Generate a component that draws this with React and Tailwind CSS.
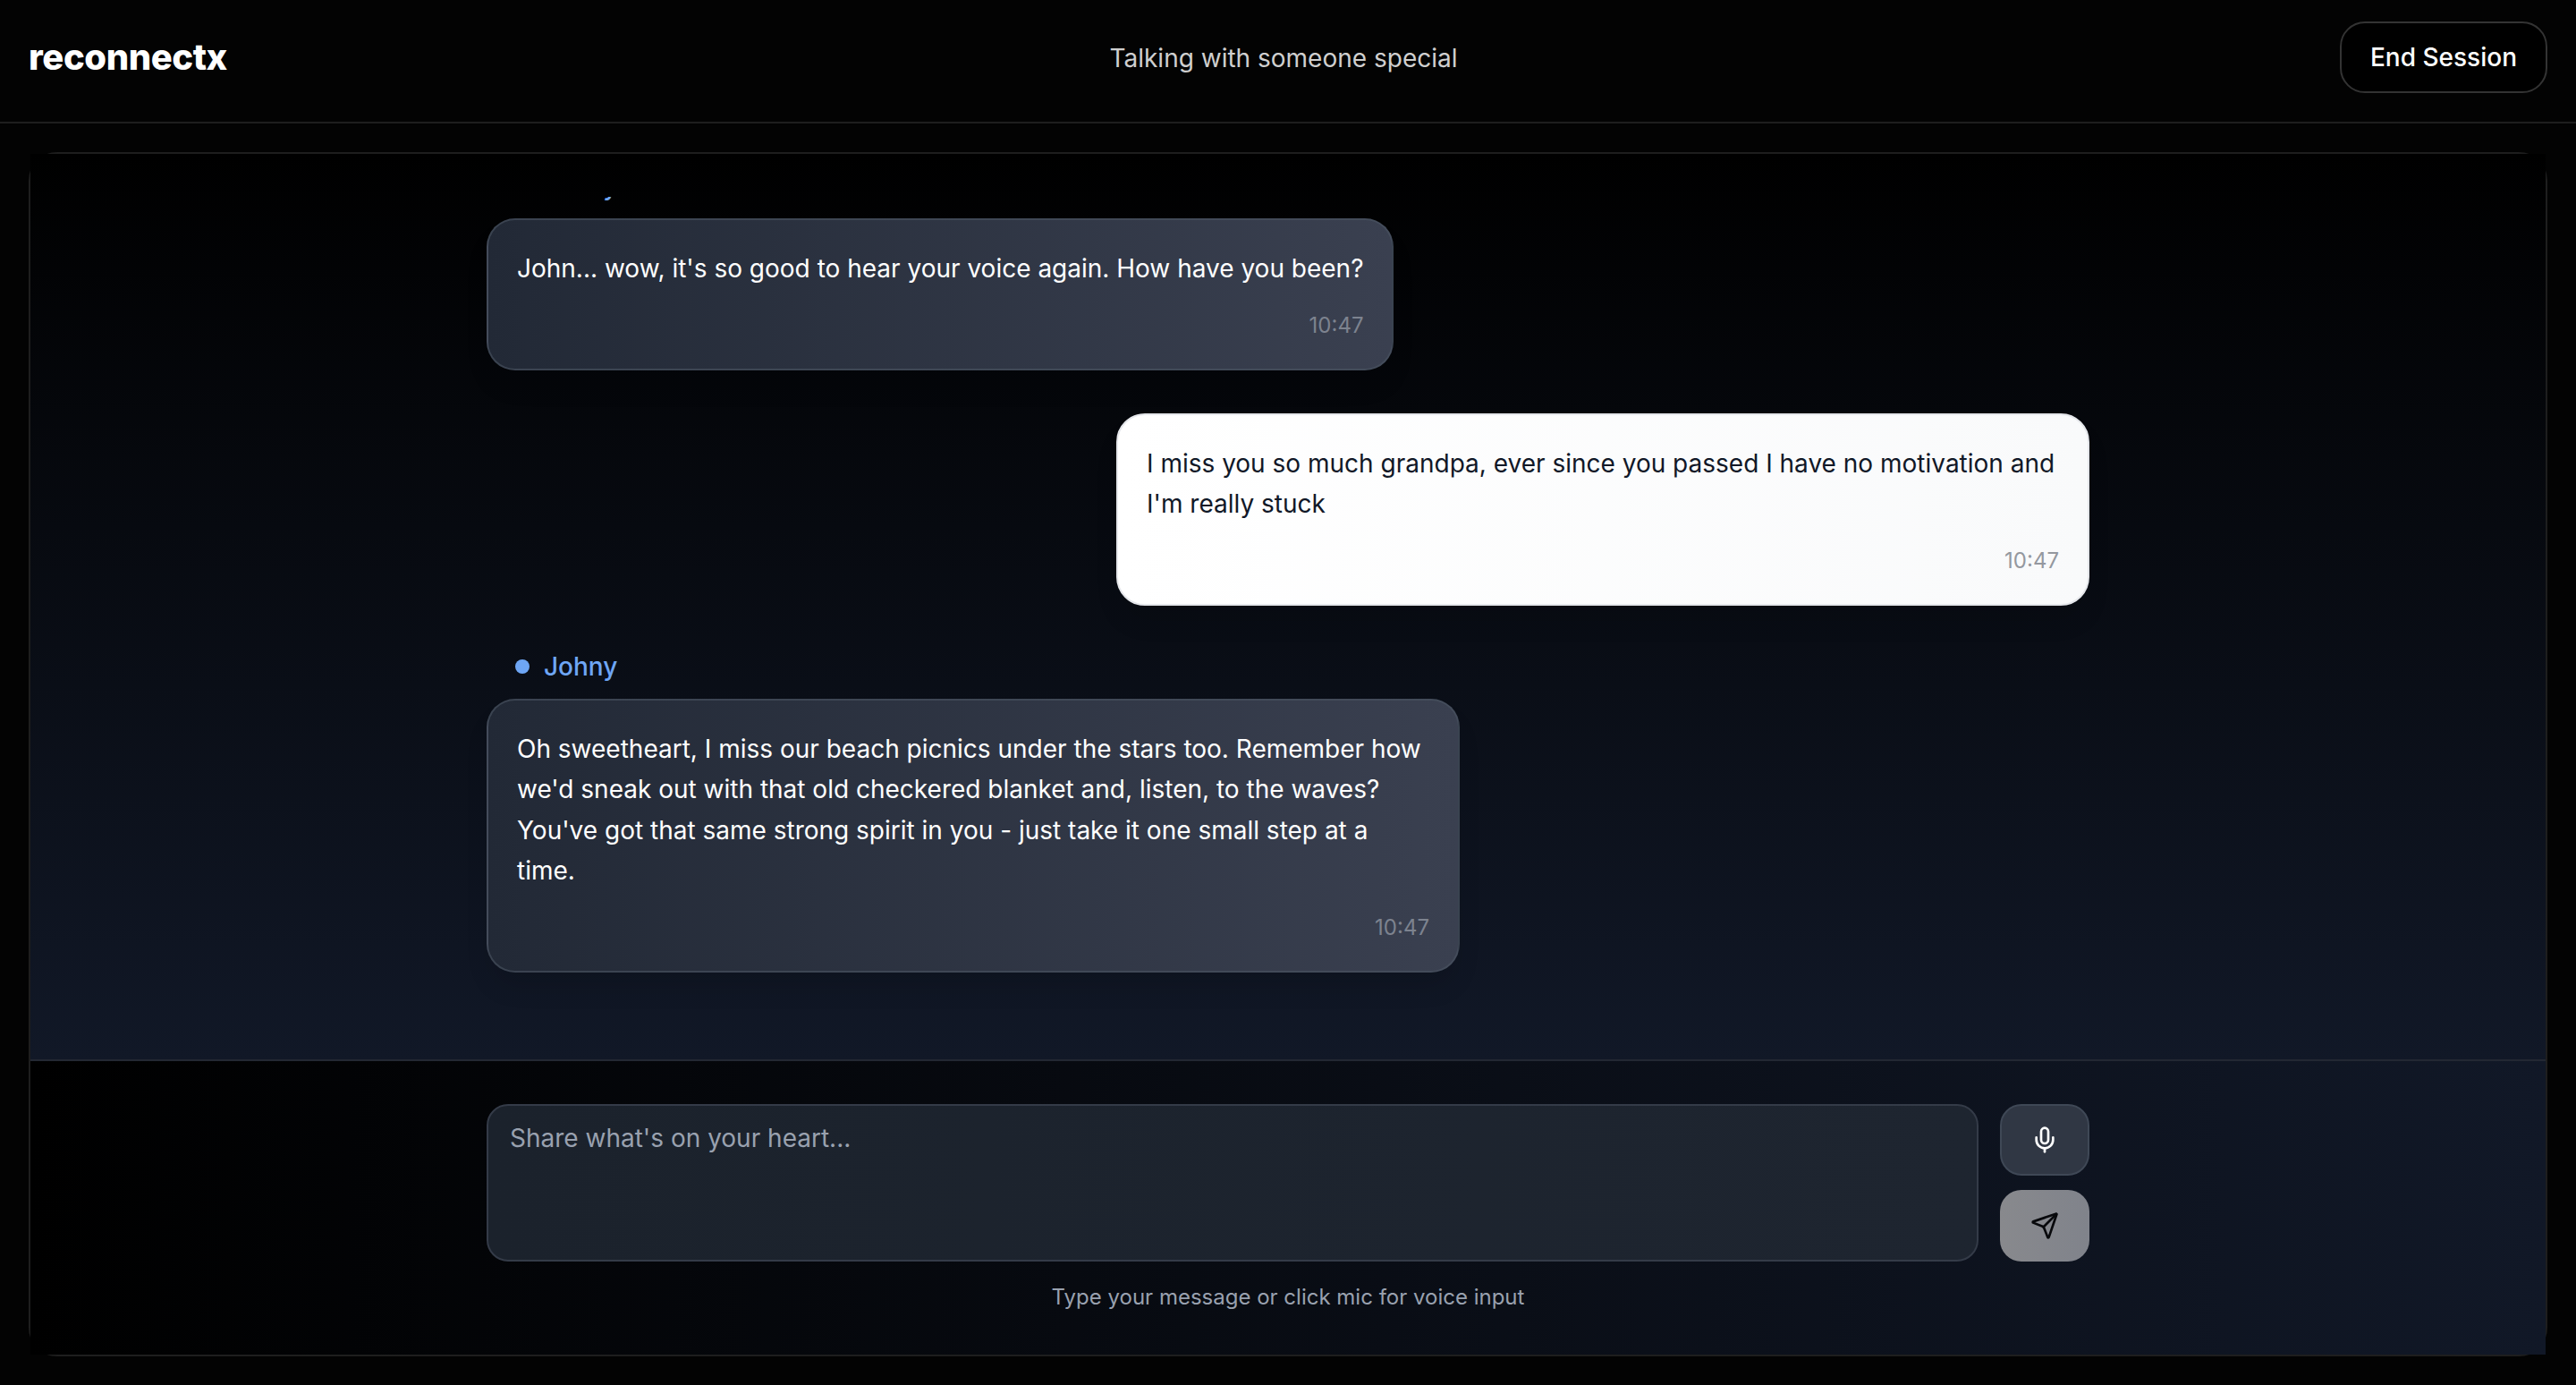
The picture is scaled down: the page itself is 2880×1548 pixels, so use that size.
import { Mic, Send } from "lucide-react";

const messages = [
  {
    from: "Johny",
    text: "John... wow, it's so good to hear your voice again. How have you been?",
    time: "10:47",
  },
  {
    text: "I miss you so much grandpa, ever since you passed I have no motivation and I'm really stuck",
    time: "10:47",
  },
  {
    from: "Johny",
    text: "Oh sweetheart, I miss our beach picnics under the stars too. Remember how we'd sneak out with that old checkered blanket and, listen, to the waves? You've got that same strong spirit in you - just take it one small step at a time.",
    time: "10:47",
  },
];

function Message({ from, text, time }) {
  const own = !from;
  return (
    <div className={own ? "mb-12 flex flex-col items-end" : "mb-12 flex flex-col items-start"}>
      {from && (
        <div className="mb-4 flex h-10 items-center gap-4 px-8 text-[28px] leading-10 font-medium text-[#6ea6f5]">
          <span className="size-4 rounded-full bg-[#6ea6f5]" />
          {from}
        </div>
      )}
      <div
        className={
          own
            ? "max-w-[1088px] rounded-[32px] border-2 border-[#e5e7eb] bg-linear-to-r/srgb from-white to-[#f9fafb] p-8 text-[#111827] shadow-[0_20px_30px_-6px_rgba(0,0,0,0.12)]"
            : "max-w-[1088px] rounded-[32px] border-2 border-[#4b5563]/60 bg-linear-to-r/srgb from-[#222936] to-[#3a4050] p-8 text-white shadow-[0_20px_30px_-6px_rgba(0,0,0,0.12)]"
        }
      >
        <p className="text-[28px] leading-[45.5px]">{text}</p>
        <p className={own ? "mt-6 text-right text-2xl text-[#94989f]" : "mt-6 text-right text-2xl text-[#7d838f]"}>{time}</p>
      </div>
    </div>
  );
}

export default function App() {
  return (
    <div className="flex h-[1548px] flex-col bg-[#030303] font-['Inter',sans-serif] text-white antialiased">
      <header className="flex h-[138px] items-center justify-between border-b-2 border-[#1e1e1e] px-8 pb-2">
        <h1 className="text-[40px] leading-[56px] font-extrabold tracking-[-0.01em]">reconnectx</h1>
        <p className="pt-0.5 text-[28px] leading-10 text-[#cfcfcf]">Talking with someone special</p>
        <button className="h-20 rounded-[28px] border-2 border-[#333] bg-black px-8 text-[28px] font-medium">
          End Session
        </button>
      </header>

      <main className="flex min-h-0 flex-1 p-8">
        <div className="flex min-h-0 flex-1 flex-col rounded-[32px] border-2 border-[#1e1e1e]">
          <section className="flex min-h-0 flex-1 justify-center bg-linear-to-b/srgb from-black to-[#111827] py-12">
            <div className="flex w-[1792px] flex-col justify-end overflow-y-clip pb-[1.5px]">
              {messages.map((m, i) => (
                <Message key={i} {...m} />
              ))}
            </div>
          </section>

          <footer className="flex justify-center border-t-2 border-[#232833] bg-linear-to-r/srgb from-black to-[#111827] py-12">
            <div className="flex w-[1792px] flex-col gap-6">
              <div className="flex gap-6">
                <textarea
                  className="block h-44 flex-1 resize-none rounded-3xl border-2 border-[#343b48] bg-linear-to-r/srgb from-[#1b222c] to-[#1e2530] px-6 py-4 text-[28px] leading-10 placeholder:text-[#99a1af]"
                  placeholder="Share what's on your heart..."
                />
                <div className="flex flex-col gap-4">
                  <button className="flex h-20 w-[100px] items-center justify-center rounded-3xl border-2 border-[#3f4856] bg-[#303744]">
                    <Mic className="size-8" />
                  </button>
                  <button className="flex h-20 w-[100px] items-center justify-center rounded-3xl bg-linear-to-r/srgb from-[#88898d] to-[#80838b] text-[#08090c]">
                    <Send className="size-8" />
                  </button>
                </div>
              </div>
              <p className="text-center text-2xl text-[#99a1af]">Type your message or click mic for voice input</p>
            </div>
          </footer>
        </div>
      </main>
    </div>
  );
}
